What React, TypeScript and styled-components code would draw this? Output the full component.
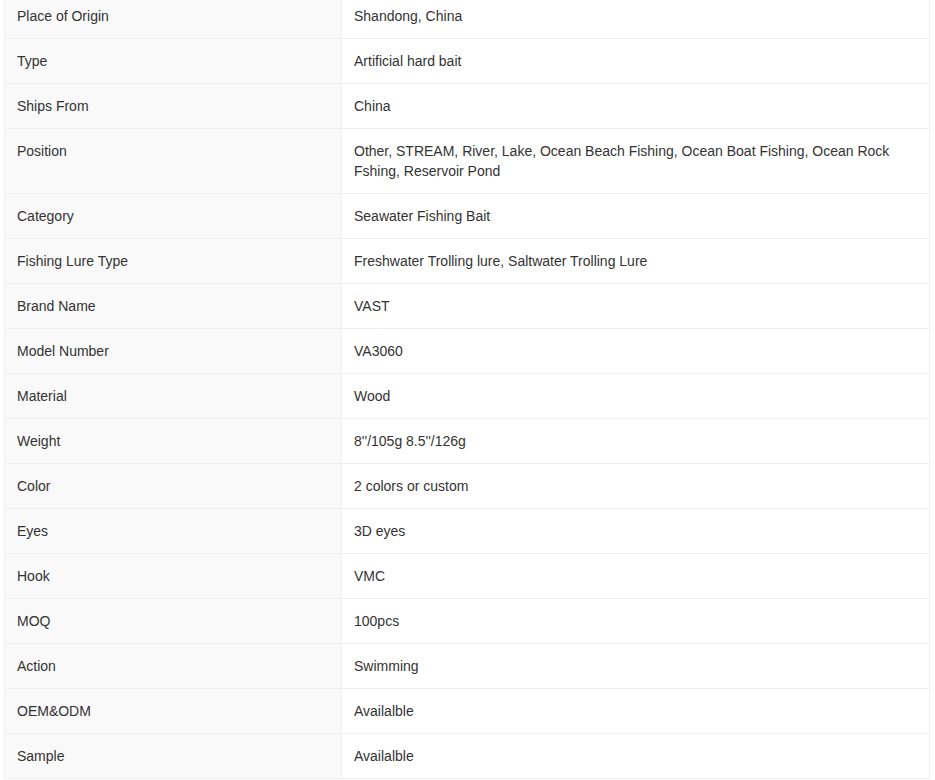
import React from "react";
import styled, { createGlobalStyle } from "styled-components";

const GlobalStyle = createGlobalStyle`
  body {
    margin: 0;
    background: #fff;
    font-family: "Liberation Sans", Arial, sans-serif;
    overflow: hidden;
  }
`;

const specs: [string, string][] = [
  ["Place of Origin", "Shandong, China"],
  ["Type", "Artificial hard bait"],
  ["Ships From", "China"],
  [
    "Position",
    "Other, STREAM, River, Lake, Ocean Beach Fishing, Ocean Boat Fishing, Ocean Rock Fshing, Reservoir Pond",
  ],
  ["Category", "Seawater Fishing Bait"],
  ["Fishing Lure Type", "Freshwater Trolling lure, Saltwater Trolling Lure"],
  ["Brand Name", "VAST"],
  ["Model Number", "VA3060"],
  ["Material", "Wood"],
  ["Weight", "8''/105g 8.5''/126g"],
  ["Color", "2 colors or custom"],
  ["Eyes", "3D eyes"],
  ["Hook", "VMC"],
  ["MOQ", "100pcs"],
  ["Action", "Swimming"],
  ["OEM&ODM", "Availalble"],
  ["Sample", "Availalble"],
];

class App extends React.Component {
  render() {
    return (
      <Page>
        <GlobalStyle />
        <SpecTable>
          <tbody>
            {specs.map(([label, value]) => (
              <Row key={label}>
                <Label>{label}</Label>
                <Value>{value}</Value>
              </Row>
            ))}
          </tbody>
        </SpecTable>
      </Page>
    );
  }
}

const Page = styled.div`
  padding: 0 5px 0 4px;
  margin-top: -7px;
`;

const SpecTable = styled.table`
  width: 100%;
  border-collapse: collapse;
  table-layout: fixed;
  border: 1px solid #efefef;
  font-size: 14px;
  line-height: 20px;
  color: #333;
`;

const Row = styled.tr`
  border-bottom: 1px solid #efefef;
`;

const Label = styled.td`
  width: 337px;
  box-sizing: border-box;
  padding: 12px;
  background: #f9f9f9;
  border-right: 1px solid #efefef;
  vertical-align: top;
`;

const Value = styled.td`
  padding: 12px;
  background: #fff;
  vertical-align: top;
`;

export default App;
